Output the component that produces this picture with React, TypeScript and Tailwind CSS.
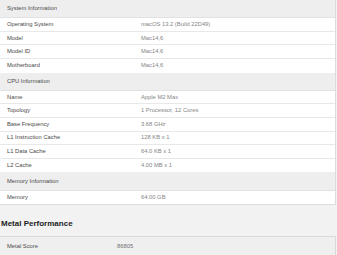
import React from "react";

type Section = { title: string; rows: [string, string][] };

const sections: Section[] = [
  {
    title: "System Information",
    rows: [
      ["Operating System", "macOS 13.2 (Build 22D49)"],
      ["Model", "Mac14,6"],
      ["Model ID", "Mac14,6"],
      ["Motherboard", "Mac14,6"],
    ],
  },
  {
    title: "CPU Information",
    rows: [
      ["Name", "Apple M2 Max"],
      ["Topology", "1 Processor, 12 Cores"],
      ["Base Frequency", "3.68 GHz"],
      ["L1 Instruction Cache", "128 KB x 1"],
      ["L1 Data Cache", "64.0 KB x 1"],
      ["L2 Cache", "4.00 MB x 1"],
    ],
  },
  {
    title: "Memory Information",
    rows: [["Memory", "64.00 GB"]],
  },
];

export default function App() {
  return (
    <div
      className="w-[337px] h-[255px] overflow-hidden bg-[#f2f2f2] text-[5.8px] text-[#4a4a4a]"
      style={{ fontFamily: '"Liberation Sans", Arial, sans-serif' }}
    >
      <div className="w-[336px] border-r border-b border-[#dcdcdc] bg-white">
        {sections.map((s) => (
          <div key={s.title}>
            <div className="h-[18.2px] flex items-center pl-[7px] bg-[#eeeeee] border-b border-[#e2e2e2] text-[#4a4a4a]">
              {s.title}
            </div>
            {s.rows.map(([k, v]) => (
              <div
                key={k}
                className="h-[13.6px] flex items-center border-b border-[#e8e8e8] last:border-b-0"
              >
                <div className="w-[141px] pl-[7px] text-[#4a4a4a]">{k}</div>
                <div className="text-[#858585]">{v}</div>
              </div>
            ))}
          </div>
        ))}
      </div>
      <div className="h-[31px] flex items-end pb-[6px] pl-[1px] text-[8px] font-bold text-[#222]">
        Metal Performance
      </div>
      <div className="w-[336px] border border-l-0 border-[#d8d8d8] bg-[#efefef]">
        <div className="h-[18px] flex items-center">
          <div className="w-[117px] pl-[7px] text-[#4a4a4a]">Metal Score</div>
          <div className="text-[#707070]">86805</div>
        </div>
      </div>
    </div>
  );
}
